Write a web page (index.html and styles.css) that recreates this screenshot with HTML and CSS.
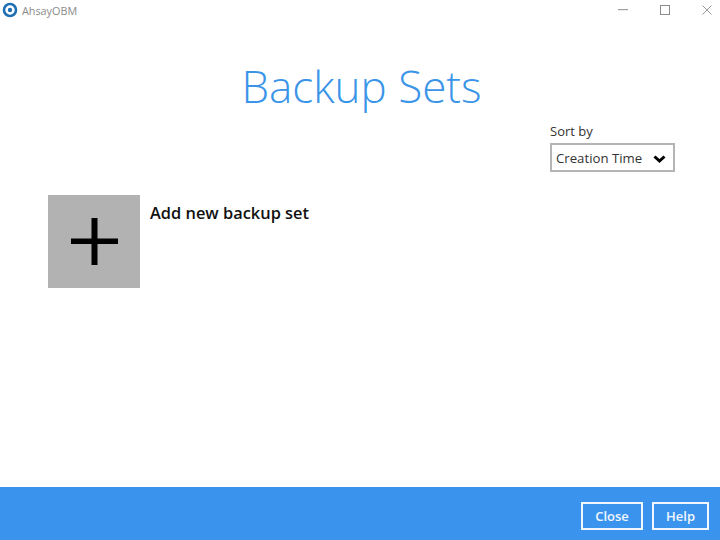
FILE: index.html
```html
<!DOCTYPE html>
<html lang="en">
<head>
<meta charset="utf-8">
<title>AhsayOBM</title>
<link rel="stylesheet" href="styles.css">
</head>
<body>
<div class="app">
  <header class="titlebar">
    <div class="brand">
      <svg class="logo" width="16" height="16" viewBox="0 0 16 16"><circle cx="8" cy="8" r="6" fill="none" stroke="#1f6fb5" stroke-width="2.6"/><circle cx="8" cy="8" r="2.2" fill="#1f6fb5"/></svg>
      <span class="app-name">AhsayOBM</span>
    </div>
    <div class="win-controls">
      <svg width="10" height="2" viewBox="0 0 10 2"><rect width="10" height="1.2" fill="#a0a0a0"/></svg>
      <svg width="10" height="10" viewBox="0 0 10 10"><rect x=".5" y=".5" width="9" height="9" fill="none" stroke="#8c8c8c"/></svg>
      <svg width="10" height="10" viewBox="0 0 10 10"><path d="M.5.5l9 9M9.5.5l-9 9" fill="none" stroke="#8c8c8c" stroke-width=".9"/></svg>
    </div>
  </header>
  <main class="content">
    <h1 class="title">Backup Sets</h1>
    <div class="sort-row">
      <div class="sort">
        <div class="sort-label">Sort by</div>
        <div class="select">
          <span>Creation Time</span>
          <svg class="chevron" width="13" height="9" viewBox="0 0 13 9"><path d="M1.5 1.5l5 4.5 5-4.5" fill="none" stroke="#000" stroke-width="3"/></svg>
        </div>
      </div>
    </div>
    <div class="add-row">
      <div class="add-tile">
        <svg width="47" height="47" viewBox="0 0 47 47"><path d="M20.5 0h6v20.5H47v5.5H26.5v21h-6V26H0v-5.5h20.5z" fill="#000"/></svg>
      </div>
      <div class="add-label">Add new backup set</div>
    </div>
  </main>
  <footer class="footer">
    <button class="btn btn-close">Close</button>
    <button class="btn btn-help">Help</button>
  </footer>
</div>
</body>
</html>
```
FILE: styles.css
```css
* { box-sizing: border-box; }
html, body { margin: 0; padding: 0; }
body { width: 720px; height: 540px; background: #fff; font-family: "Open Sans", "Noto Sans", sans-serif; overflow: hidden; }
.app { width: 720px; height: 540px; display: flex; flex-direction: column; }
.titlebar { height: 20px; display: flex; justify-content: space-between; align-items: center; padding-left: 2px; }
.brand { display: flex; align-items: center; gap: 4px; }
.logo { display: block; }
.app-name { font-size: 10.8px; color: #8a8a8a; }
.win-controls { display: flex; align-items: center; gap: 32px; padding-right: 8px; justify-content: flex-end; }
.win-controls svg { display: block; }
.content { flex: 1; display: flex; flex-direction: column; padding: 0 45px 0 48px; }
.title { margin: 36px 0 0; text-align: center; font-weight: 300; font-size: 44px; line-height: 60px; color: #3a94e8; width: 627px; }
.sort-row { display: flex; justify-content: flex-end; margin-top: 6px; }
.sort { width: 125px; }
.sort-label { font-size: 13px; line-height: 18px; color: #333; }
.select { margin-top: 3px; height: 29px; border: 2px solid #b4b4b4; display: flex; align-items: center; justify-content: space-between; padding: 0 7px 0 4px; font-size: 13.2px; color: #333; }
.chevron { margin-top: 3px; }
.add-row { display: flex; align-items: flex-start; gap: 10px; margin-top: 23px; }
.add-tile { width: 92px; height: 93px; background: #b2b2b2; display: flex; align-items: center; justify-content: center; }
.add-tile svg { display: block; }
.add-label { font-size: 16.4px; font-weight: 600; line-height: 22px; color: #111; margin-top: 7px; }
.footer { height: 53px; background: #3a94ee; display: flex; justify-content: flex-end; align-items: center; gap: 9px; padding: 4px 11px 0 0; }
.btn { height: 28px; border: 2px solid #f2f7fd; background: transparent; color: #f2f7fd; font-family: "Open Sans", sans-serif; font-size: 13px; font-weight: 600; padding: 0; }
.btn-close { width: 62px; }
.btn-help { width: 57px; }
```
